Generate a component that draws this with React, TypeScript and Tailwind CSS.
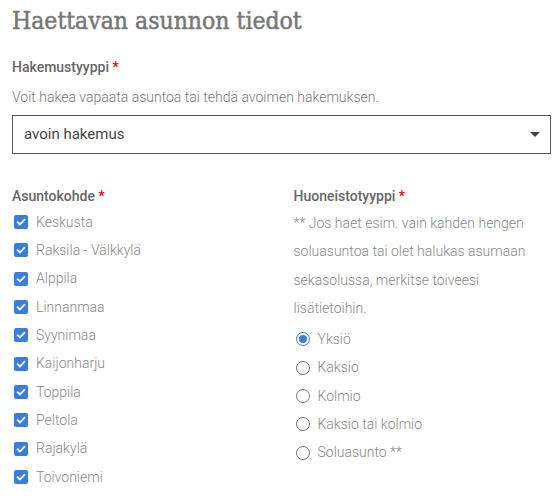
import React from "react";

const areas = ["Keskusta","Raksila - Välkkylä","Alppila","Linnanmaa","Syynimaa","Kaijonharju","Toppila","Peltola","Rajakylä","Toivoniemi"];
const types = ["Yksiö","Kaksio","Kolmio","Kaksio tai kolmio","Soluasunto **"];

function Check() {
  return (
    <span className="w-[14px] h-[14px] rounded-[2px] bg-[#3b7ddd] flex items-center justify-center shrink-0">
      <svg width="10" height="10" viewBox="0 0 10 10"><path d="M1.6 5.2 L4 7.5 L8.5 2.7" stroke="white" strokeWidth="1.8" fill="none" strokeLinecap="round" strokeLinejoin="round"/></svg>
    </span>
  );
}

function Radio({ on }: { on: boolean }) {
  return (
    <span className={`w-[14px] h-[14px] rounded-full border shrink-0 flex items-center justify-center ${on ? "border-[#3b7ddd]" : "border-[#777]"}`}>
      {on && <span className="w-[8px] h-[8px] rounded-full bg-[#3b7ddd]" />}
    </span>
  );
}

export default function App() {
  return (
    <div className="w-[559px] h-[500px] bg-white pl-3 pr-2 overflow-hidden" style={{ fontFamily: "Roboto, 'Liberation Sans', sans-serif" }}>
      <h1 className="text-[24.5px] leading-[40px] text-[#777] font-normal pt-[1px] [-webkit-text-stroke:0.5px_#777]" style={{ fontFamily: "'DejaVu Serif Condensed', 'DejaVu Serif', serif" }}>Haettavan asunnon tiedot</h1>
      <div className="mt-[12px] text-[14px] leading-[28px] font-medium text-[#666]">Hakemustyyppi <span className="text-[#e00]">*</span></div>
      <div className="text-[14px] leading-[32px] font-light text-[#777]">Voit hakea vapaata asuntoa tai tehdä avoimen hakemuksen.</div>
      <div className="mt-[2px] h-[39px] border border-[#555] flex items-center justify-between pl-[11px] pr-[10px]">
        <span className="text-[15px] text-[#444]">avoin hakemus</span>
        <svg width="10" height="6" viewBox="0 0 10 6"><path d="M0 0 H10 L5 5 Z" fill="#444"/></svg>
      </div>
      <div className="grid grid-cols-2 gap-x-6 mt-[28px]">
        <div>
          <div className="text-[14px] leading-[28px] font-medium text-[#666]">Asuntokohde <span className="text-[#e00]">*</span></div>
          <div className="flex flex-col -mt-[2px]">
            {areas.map(a => (
              <div key={a} className="h-[28.33px] flex items-center gap-[8px] pl-[2px]">
                <Check />
                <span className="text-[14px] font-light text-[#888]">{a}</span>
              </div>
            ))}
          </div>
        </div>
        <div>
          <div className="text-[14px] leading-[28px] font-medium text-[#666]">Huoneistotyyppi <span className="text-[#e00]">*</span></div>
          <p className="-mt-[1px] text-[14px] leading-[28.33px] font-light text-[#888]">** Jos haet esim. vain kahden hengen soluasuntoa tai olet halukas asumaan sekasolussa, merkitse toiveesi lisätietoihin.</p>
          <div className="flex flex-col mt-[3px]">
            {types.map((t, i) => (
              <div key={t} className="h-[28.33px] flex items-center gap-[8px] pl-[2px]">
                <Radio on={i === 0} />
                <span className="text-[14px] font-light text-[#888]">{t}</span>
              </div>
            ))}
          </div>
        </div>
      </div>
    </div>
  );
}
